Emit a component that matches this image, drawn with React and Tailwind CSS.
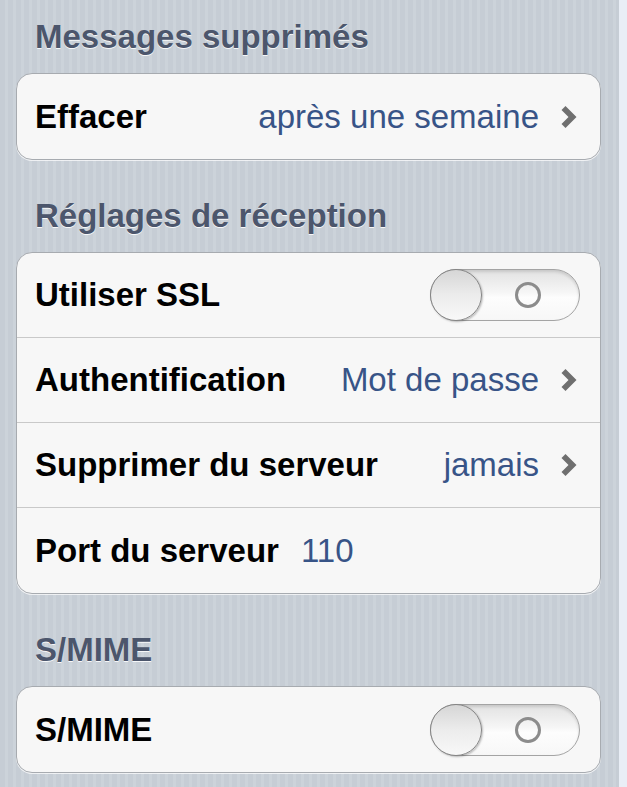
import React from "react";

const font = { fontFamily: '"Liberation Sans", Arial, Helvetica, sans-serif' };

function Chevron() {
  return (
    <svg width="16" height="22" viewBox="0 0 16 22" className="block shrink-0 w-[16px] h-[22px]">
      <polygon points="0.5,4 4.5,0 15.5,11 4.5,22 0.5,18 7.5,11" fill="#6f6f6f" />
    </svg>
  );
}

function Toggle() {
  return (
    <div className="relative w-[150px] h-[52px] shrink-0 rounded-full border border-[#a4a4a4] bg-[linear-gradient(#e2e2e2,#f6f6f6_45%,#fdfdfd_55%,#f7f7f7)] shadow-[inset_0_2px_3px_rgba(0,0,0,0.12)]">
      <div className="absolute left-[84px] top-[12px] w-[26px] h-[26px] rounded-full border-[3px] border-[#8c8c8c]" />
      <div className="absolute left-[-1px] top-[-1px] w-[52px] h-[52px] rounded-full border border-[#858585] bg-[linear-gradient(#d6d6d6,#ececec_50%,#f8f8f8)] shadow-[1px_1px_2px_rgba(0,0,0,0.25)]" />
    </div>
  );
}

function Header({ children, className = "" }) {
  return (
    <div
      className={`pl-[19px] h-[40px] leading-[40px] text-[33px] font-bold text-[#4c566c] [text-shadow:0_1px_0_rgba(255,255,255,0.85)] ${className}`}
    >
      {children}
    </div>
  );
}

function Card({ children }) {
  return (
    <div className="rounded-[16px] border border-[#a7abb0] bg-[#f7f7f7] shadow-[0_1px_0_rgba(255,255,255,0.7)] overflow-hidden">
      {children}
    </div>
  );
}

function Row({ label, detail, chevron, toggle, inlineValue, last }) {
  return (
    <div
      className={`flex items-center h-[85px] pl-[18px] pr-[20px] ${
        last ? "" : "border-b border-[#c9c9c9]"
      }`}
    >
      <span className="text-[33px] font-bold text-black whitespace-nowrap">{label}</span>
      {inlineValue && (
        <span className="ml-[22px] text-[33px] text-[#385487]">{inlineValue}</span>
      )}
      <div className="flex-1" />
      {detail && (
        <span className="text-[33px] text-[#385487] whitespace-nowrap">{detail}</span>
      )}
      {chevron && (
        <span className="ml-[22px] mr-[3px] flex items-center">
          <Chevron />
        </span>
      )}
      {toggle && <Toggle />}
    </div>
  );
}

export default function App() {
  return (
    <div className="flex w-full h-[787px] overflow-hidden" style={font}>
      <div className="flex-1 pt-[17px] pl-[16px] pr-[18px] bg-[image:repeating-linear-gradient(90deg,#c6cdd5_0px,#c6cdd5_5px,#ccd3da_5px,#ccd3da_8px)]">
        <Header className="mb-[16px]">Messages supprimés</Header>
        <Card>
          <Row label="Effacer" detail="après une semaine" chevron last />
        </Card>

        <Header className="mt-[36px] mb-[16px]">Réglages de réception</Header>
        <Card>
          <Row label="Utiliser SSL" toggle />
          <Row label="Authentification" detail="Mot de passe" chevron />
          <Row label="Supprimer du serveur" detail="jamais" chevron />
          <Row label="Port du serveur" inlineValue="110" last />
        </Card>

        <Header className="mt-[36px] mb-[16px]">S/MIME</Header>
        <Card>
          <Row label="S/MIME" toggle last />
        </Card>
      </div>
      <div className="w-[8px] shrink-0 bg-[#e9eef6]" />
    </div>
  );
}
